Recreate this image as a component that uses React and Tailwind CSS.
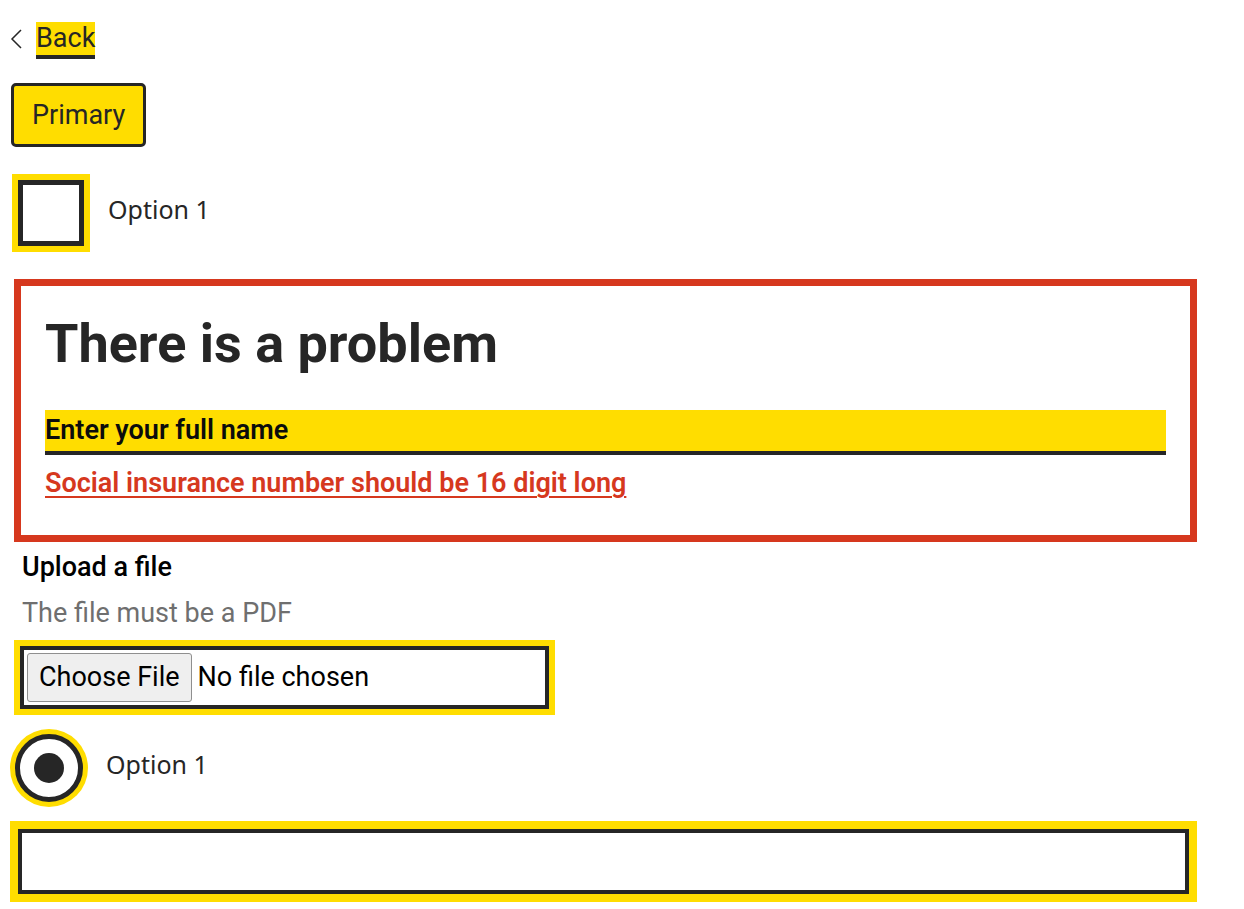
import React from "react";

const App = () => {
  return (
    <div className="min-h-screen bg-white font-['Roboto',sans-serif] text-[#262626] pl-[10px] pr-[47px] pt-[22px]">
      {/* back link */}
      <div className="flex items-center h-[37px]">
        <svg width="14" height="22" viewBox="0 0 14 22" className="mr-[12px] mb-[4px]">
          <path d="M11 2 L2 11 L11 20" fill="none" stroke="#262626" strokeWidth="1.5" />
        </svg>
        <a href="#" className="self-start bg-[#ffdd00] text-[27px] leading-[33px] text-[#262626] shadow-[0_4px_0_#262626]">
          Back
        </a>
      </div>

      <button className="mt-[24px] ml-[1px] h-[64px] px-[18px] rounded-[5px] border-[3px] border-[#262626] bg-[#ffdd00] text-[27px] text-[#262626] block">
        Primary
      </button>

      {/* checkbox */}
      <div className="mt-[27px] ml-[2px] flex items-center">
        <div className="w-[78px] h-[78px] bg-[#ffdd00] p-[6px]">
          <div className="w-full h-full border-[5px] border-[#262626] bg-white" />
        </div>
        <span className="ml-[18px] mb-[8px] text-[25px] leading-[30px] font-['Noto_Sans',sans-serif]">Option 1</span>
      </div>

      {/* error summary */}
      <div className="mt-[27px] ml-[4px] border-[7px] border-[#d6381e] px-[24px] pt-[26px] pb-[36px]">
        <h2 className="text-[54px] font-bold leading-[64px] text-[#262626]">There is a problem</h2>
        <ul className="mt-[34px] flex flex-col">
          <li>
            <a href="#" className="block h-[45px] bg-[#ffdd00] border-b-[4px] border-[#262626] text-[27px] font-semibold leading-[40px] text-[#0b0c0c]">
              Enter your full name
            </a>
          </li>
          <li className="mt-[12px]">
            <a href="#" className="text-[27px] font-semibold leading-[32px] text-[#d6381e] underline decoration-2 underline-offset-[4px]">
              Social insurance number should be 16 digit long
            </a>
          </li>
        </ul>
      </div>

      {/* file upload */}
      <div className="mt-[12px] ml-[12px] text-[27px] font-medium leading-[26px] text-black">Upload a file</div>
      <div className="mt-[20px] ml-[12px] text-[27px] leading-[26px] text-[#6f6f6f]">The file must be a PDF</div>
      <div className="mt-[14px] ml-[4px] w-[541px] h-[75px] bg-[#ffdd00] p-[6px]">
        <div className="h-full border-[4px] border-[#262626] bg-white flex items-center pl-[3px]">
          <span className="h-[49px] px-[11px] flex items-center bg-[#efefef] border border-[#8f8f8f] rounded-[3px] text-[27px] text-black">
            Choose File
          </span>
          <span className="ml-[6px] text-[27px] text-black">No file chosen</span>
        </div>
      </div>

      {/* radio */}
      <div className="mt-[14px] flex items-center">
        <div className="w-[78px] h-[78px] rounded-full bg-[#ffdd00] p-[5px]">
          <div className="w-full h-full rounded-full border-[5px] border-[#262626] bg-white flex items-center justify-center">
            <div className="w-[30px] h-[30px] rounded-full bg-[#262626]" />
          </div>
        </div>
        <span className="ml-[18px] mb-[8px] text-[25px] leading-[30px] font-['Noto_Sans',sans-serif]">Option 1</span>
      </div>

      {/* text input */}
      <div className="mt-[14px] h-[81px] bg-[#ffdd00] p-[8px]">
        <input type="text" className="w-full h-full border-[4px] border-[#262626] bg-white outline-none px-2 text-[27px]" />
      </div>
    </div>
  );
};

export default App;
